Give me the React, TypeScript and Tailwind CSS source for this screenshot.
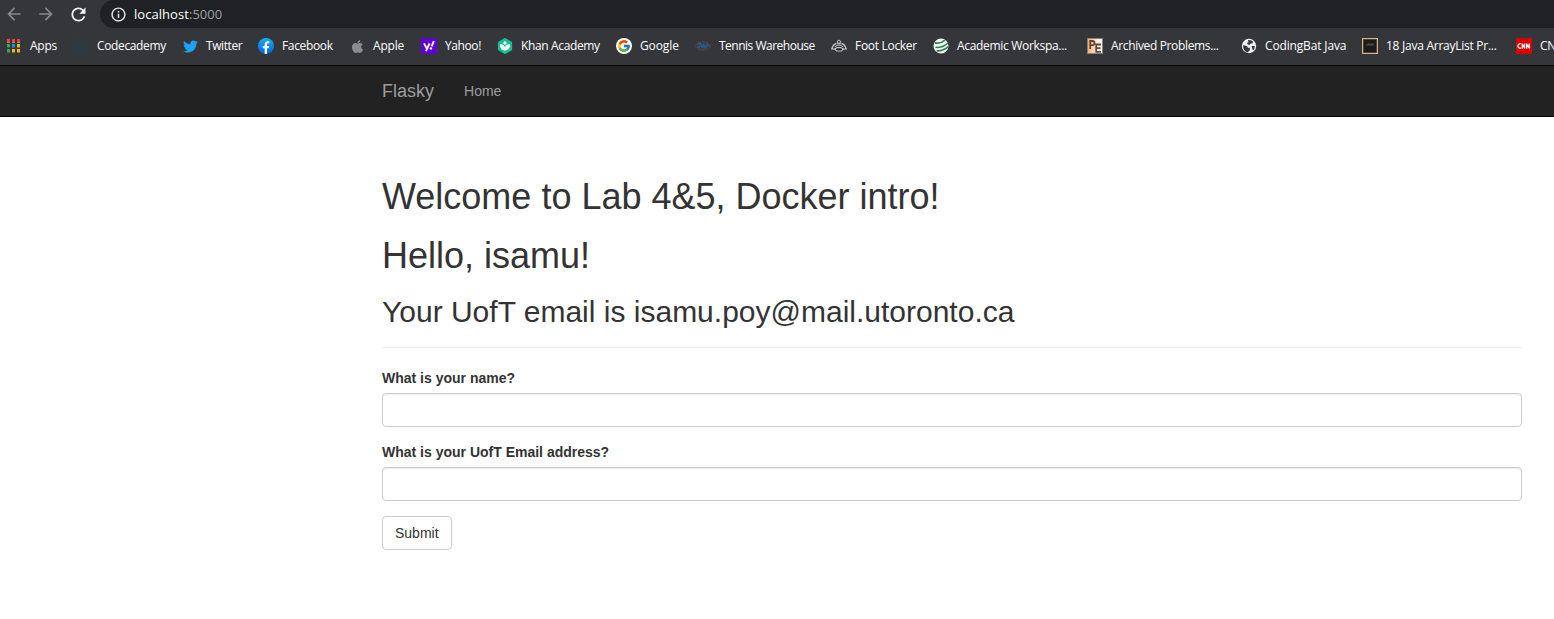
import type { ReactNode } from "react";
import { MdArrowBack, MdArrowForward, MdInfoOutline, MdRefresh } from "react-icons/md";
import { FaApple, FaTwitter } from "react-icons/fa";
import { FcGoogle } from "react-icons/fc";

function AppsIcon() {
  const colors = ["#ea4335", "#ea4335", "#ea4335", "#34a853", "#1a8cff", "#fbb400", "#34a853", "#fbb400", "#fbb400"];
  return (
    <svg width="16" height="16" shapeRendering="crispEdges">
      {colors.map((c, i) => (
        <g key={i}>
          <rect x={1 + (i % 3) * 5} y={1 + Math.floor(i / 3) * 5} width="3" height="3" fill={c} />
          <rect x={1 + (i % 3) * 5} y={4 + Math.floor(i / 3) * 5} width="3" height="1" fill={i < 3 ? "#8f8f8f" : c} opacity={i < 3 ? 1 : 0.45} />
        </g>
      ))}
    </svg>
  );
}

function CodecademyIcon() {
  return (
    <svg width="16" height="16" fill="none" stroke="#213f53" strokeWidth="1.3">
      <rect x="1" y="1.6" width="9" height="12.6" rx="0.6" />
      <path d="M7.3 6.2C5.8 5 4 6 4 8s1.800 2.900 3.300 1.800M12 14.200h4" />
    </svg>
  );
}

function FacebookIcon() {
  return (
    <svg width="16" height="16" viewBox="0 0 16 16">
      <defs>
        <linearGradient id="fb" x1="0" y1="0" x2="0" y2="1">
          <stop offset="0" stopColor="#18acfe" />
          <stop offset="1" stopColor="#0163e0" />
        </linearGradient>
      </defs>
      <circle cx="8" cy="8" r="8" fill="url(#fb)" />
      <path fill="#fff" d="M6.700 15.900v-5.600H4.700V8h2V6.300c0-2 1.200-3.100 3-3.100.8 0 1.500.1 1.500.1v2h-.9c-1 0-1.300.6-1.300 1.200V8h2.200l-.4 2.300H9v5.600a8 8 0 0 1-2.300 0z" />
    </svg>
  );
}

function YahooIcon() {
  return (
    <svg width="16" height="16" viewBox="0 0 16 16">
      <rect width="16" height="16" fill="#6001d2" />
      <path fill="none" stroke="#fff" strokeWidth="1.900" d="M3 5.400l2.700 4.800M8.600 5.400L5 13.200M12.900 3l-2.300 5.400" />
      <circle cx="9.900" cy="10.400" r="1.200" fill="#fff" />
    </svg>
  );
}

function KhanIcon() {
  return (
    <svg width="16" height="16" viewBox="0 0 16 16">
      <path fill="#14bf96" d="M7.200.3q.8-.4 1.600 0l5.500 3.100q.8.5.8 1.400v6.400q0 .9-.8 1.400l-5.500 3.100q-.8.4-1.600 0l-5.500-3.100q-.8-.5-.8-1.400V4.800q0-.9.8-1.400z" />
      <circle cx="8" cy="4.900" r="1.600" fill="#fff" />
      <path fill="#fff" d="M2.900 6c2.700.2 4.600 1.400 5.100 3.200.5-1.800 2.400-3 5.100-3.200 0 4-1.700 6.500-5.100 6.500S2.900 10 2.900 6z" />
    </svg>
  );
}

function GoogleIcon() {
  return (
    <span className="flex size-4 items-center justify-center rounded-full bg-white">
      <FcGoogle size={14} />
    </span>
  );
}

function TennisIcon() {
  return (
    <svg width="16" height="16" viewBox="0 0 16 16" fill="none">
      <ellipse cx="8" cy="8" rx="7.300" ry="4.200" stroke="#754536" strokeWidth="1" strokeDasharray="3 .7" />
      <path d="M2 6.300l4-.8-2 5M6.500 6.400l.2 3.500 2-3.800.3 3.700 2.500-4M10 10.500l4-3.500M2 9.500l3.500-2.500M11.500 6l2 .5" stroke="#27598b" strokeWidth="1.400" />
    </svg>
  );
}

function FootLockerIcon() {
  return (
    <svg width="16" height="16" viewBox="0 0 16 16" fill="none" stroke="#c4c4c4">
      <path d="M6.300 3.200L8 2l1.700 1.200-.5 1.900H6.800z" fill="#333" strokeWidth="1" />
      <path d="M5.500 5.500C3 6 1.500 8.500.8 11l4.400.2M10.500 5.500c2.500.5 4 3 4.700 5.500l-4.400.2" strokeWidth="1.300" />
      <path d="M3.800 8.800l3-1.600h2.400l3 1.600M6 5.800h4" strokeWidth="1" />
      <path d="M4 11l2-1.400h4l2 1.400-1.500 2h-5z" fill="#222" strokeWidth="1.100" />
    </svg>
  );
}

function AcademicIcon() {
  return (
    <svg width="16" height="16" viewBox="0 0 16 16">
      <clipPath id="globe"><circle cx="8" cy="8" r="7.500" /></clipPath>
      <circle cx="8" cy="8" r="7.500" fill="#f3f7f4" />
      <g clipPath="url(#globe)" fill="none" stroke="#2c8250" strokeWidth="1.600">
        <path d="M2 4.900c4 .8 7.500-.5 10-2.800M2.500 9.300c4.500.6 9.500-1.200 12.500-4.500M3.500 12.800c4 .4 8-.9 12-4.200" />
      </g>
    </svg>
  );
}

function ArchivedIcon() {
  return (
    <svg width="16" height="16" viewBox="0 0 16 16">
      <defs>
        <linearGradient id="pe"><stop offset="0" stopColor="#ffad61" /><stop offset=".7" stopColor="#fff4e8" /></linearGradient>
      </defs>
      <rect x=".5" y=".5" width="15" height="15" fill="url(#pe)" stroke="#84827e" />
      <path fill="none" stroke="#604638" strokeWidth="1.800" d="M3.200 11V3h2.200c2.800 0 2.800 4.200 0 4.200H3.200M14 6.500H9.200v7.300H14M9.200 10.200h4.300" />
    </svg>
  );
}

function GlobeIcon() {
  return (
    <svg width="16" height="16" viewBox="0 0 16 16">
      <circle cx="8" cy="8" r="7.200" fill="#f1f3f4" />
      <path fill="#35363a" d="M2.300 7l4 1.300.4 1.500h2.200v2.700l-1.400.4v1.600C4 14.300 1.500 10.800 2.300 7zM7.100 2.100c2-.4 3.900.4 5 1.700l-.6 1.700H9.600l-.7 1.200H7.100l-.9-.9v-1.300h1.200zM10.600 8h3.200c0 1.800-.6 3.200-1.800 4.300l-.9-1.500z" />
    </svg>
  );
}

function JavaIcon() {
  return (
    <svg width="16" height="16" viewBox="0 0 16 16">
      <rect x=".6" y=".6" width="14.800" height="14.800" fill="#1b1b1d" stroke="#d8b383" strokeWidth="1.300" />
      <path fill="none" stroke="#77777b" strokeWidth=".6" d="M5 5.600v1.700H4M6 7.500l.8-1.900.8 1.900M8 5.600l.8 1.900.8-1.900M10 7.500l.8-1.900.8 1.900" />
    </svg>
  );
}

function CnnIcon() {
  return (
    <svg width="16" height="16" viewBox="0 0 16 16">
      <rect width="16" height="16" fill="#d90000" />
      <path fill="none" stroke="#fff" strokeWidth="1.300" strokeLinejoin="round" d="M5 5.800C3.200 5.300 1.900 6.500 1.900 8s1.200 2.600 3.200 2.100M6.300 10.700V6l2.300 4V5.500M10.700 10.700V6l2.500 4V5.500" />
    </svg>
  );
}

type Bookmark = { label: string; icon: ReactNode; width: string; tracking: string };

const bookmarks: Bookmark[] = [
  { label: "Apps", icon: <AppsIcon />, width: "w-[67px]", tracking: "tracking-[-0.25px]" },
  { label: "Codecademy", icon: <CodecademyIcon />, width: "w-[109px]", tracking: "tracking-[-0.37px]" },
  { label: "Twitter", icon: <FaTwitter size={15} color="#1da1f2" />, width: "w-[76px]", tracking: "tracking-[-0.4px]" },
  { label: "Facebook", icon: <FacebookIcon />, width: "w-[91px]", tracking: "tracking-[-0.35px]" },
  { label: "Apple", icon: <FaApple size={15} color="#8c8c8c" />, width: "w-[72px]", tracking: "tracking-[-0.2px]" },
  { label: "Yahoo!", icon: <YahooIcon />, width: "w-[76px]", tracking: "tracking-[-0.4px]" },
  { label: "Khan Academy", icon: <KhanIcon />, width: "w-[119px]", tracking: "tracking-[-0.36px]" },
  { label: "Google", icon: <GoogleIcon />, width: "w-[79px]", tracking: "tracking-[-0.1px]" },
  { label: "Tennis Warehouse", icon: <TennisIcon />, width: "w-[136px]", tracking: "tracking-[-0.5px]" },
  { label: "Foot Locker", icon: <FootLockerIcon />, width: "w-[102px]", tracking: "tracking-[-0.3px]" },
  { label: "Academic Workspa...", icon: <AcademicIcon />, width: "w-[154px]", tracking: "tracking-[-0.31px]" },
  { label: "Archived Problems...", icon: <ArchivedIcon />, width: "w-[154px]", tracking: "tracking-[-0.35px]" },
  { label: "CodingBat Java", icon: <GlobeIcon />, width: "w-[121px]", tracking: "tracking-[-0.15px]" },
  { label: "18 Java ArrayList Pr...", icon: <JavaIcon />, width: "w-[154px]", tracking: "tracking-[-0.26px]" },
  { label: "CNN", icon: <CnnIcon />, width: "w-[60px]", tracking: "tracking-[-0.2px]" },
];

function BrowserChrome() {
  return (
    <header className="h-[65px] overflow-hidden bg-[#35363a] font-['Open_Sans',sans-serif]">
      <div className="flex h-7 items-center">
        <div className="flex w-[100px] items-center gap-3 pl-1">
          <MdArrowBack size={20} color="#87888b" />
          <MdArrowForward size={20} color="#87888b" />
          <MdRefresh size={21} color="#f1f3f4" />
        </div>
        <div className="flex h-7 flex-1 items-center rounded-l-full bg-[#202124] pl-[9.500px]">
          <MdInfoOutline size={17} color="#e8eaed" />
          <span className="ml-[7.500px] text-[13px] leading-5 tracking-[0.05px] text-[#9aa0a6]">
            <span className="text-white">localhost</span>:5000
          </span>
        </div>
      </div>
      <nav className="flex h-9 items-center pl-1.5">
        {bookmarks.map((b) => (
          <a key={b.label} className={`flex shrink-0 items-center gap-2 whitespace-nowrap ${b.width}`}>
            <span className="flex size-4 shrink-0 items-center justify-center">{b.icon}</span>
            <span className={`text-[12px] leading-4 text-white ${b.tracking}`}>{b.label}</span>
          </a>
        ))}
      </nav>
    </header>
  );
}

function Field({ label, id }: { label: string; id: string }) {
  return (
    <div className="mb-[15px]">
      <label htmlFor={id} className="mb-[5px] block text-sm leading-5 font-bold">{label}</label>
      <input
        id={id}
        type="text"
        className="block h-[34px] w-full rounded-sm border border-[#ccc] bg-white px-3 text-sm shadow-[inset_0_1px_1px_rgba(0,0,0,0.075)] outline-none"
      />
    </div>
  );
}

export default function App() {
  return (
    <div className="h-[619px] overflow-hidden bg-white font-['Liberation_Sans',Arial,sans-serif] text-sm text-[#333]">
      <BrowserChrome />
      <div className="flex h-[52px] items-center border-y border-[#080808] bg-[#222] pl-[382px] text-[#9d9d9d]">
        <a className="text-lg leading-5">Flasky</a>
        <a className="ml-[30px] text-sm leading-5">Home</a>
      </div>
      <main className="ml-[382px] w-[1140px] pt-[60px]">
        <h1 className="text-[36px] leading-[39px] font-medium">Welcome to Lab 4&amp;5, Docker intro!</h1>
        <h1 className="mt-5 text-[36px] leading-[39px] font-medium">Hello, isamu!</h1>
        <h2 className="mt-5 text-[30px] leading-[33px] font-medium">Your UofT email is isamu.poy@mail.utoronto.ca</h2>
        <hr className="mt-[19px] mb-5 border-[#eee]" />
        <form>
          <Field label="What is your name?" id="name" />
          <Field label="What is your UofT Email address?" id="email" />
          <button type="button" className="block h-[34px] rounded-sm border border-[#ccc] bg-white px-3 text-sm leading-5">Submit</button>
        </form>
      </main>
    </div>
  );
}
